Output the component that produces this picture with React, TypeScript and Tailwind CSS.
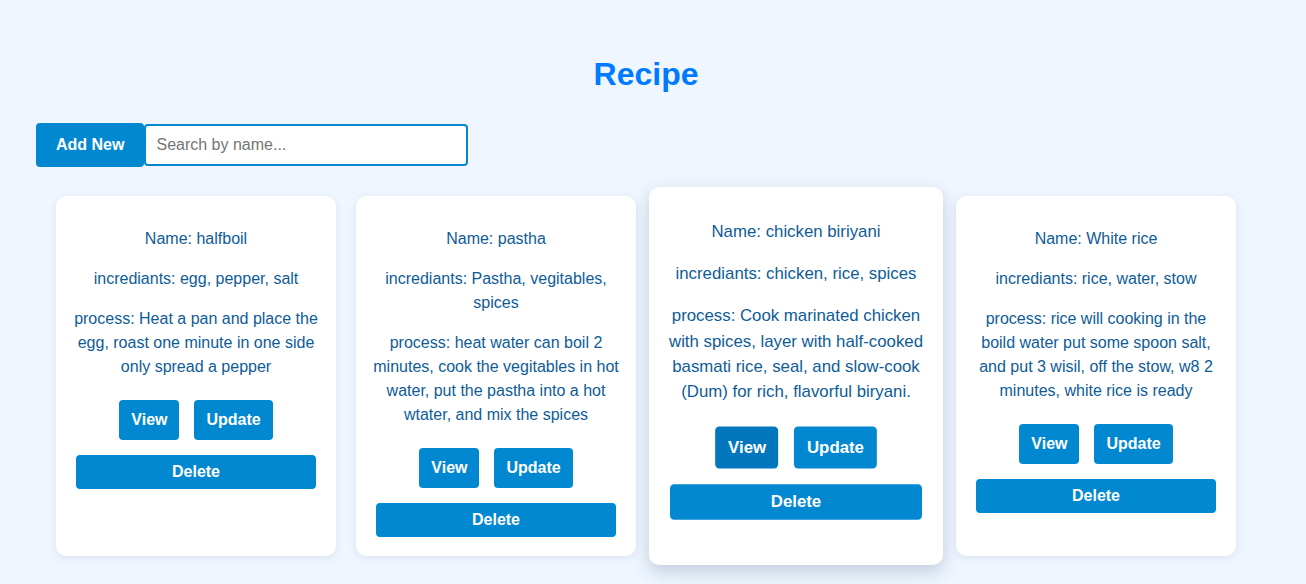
import { useState } from "react";

type Recipe = {
  id: number;
  name: string;
  incrediants: string;
  process: string;
};

const RECIPES: Recipe[] = [
  {
    id: 1,
    name: "halfboil",
    incrediants: "egg, pepper, salt",
    process: "Heat a pan and place the egg, roast one minute in one side only spread a pepper",
  },
  {
    id: 2,
    name: "pastha",
    incrediants: "Pastha, vegitables, spices",
    process:
      "heat water can boil 2 minutes, cook the vegitables in hot water, put the pastha into a hot wtater, and mix the spices",
  },
  {
    id: 3,
    name: "chicken biriyani",
    incrediants: "chicken, rice, spices",
    process:
      "Cook marinated chicken with spices, layer with half-cooked basmati rice, seal, and slow-cook (Dum) for rich, flavorful biryani.",
  },
  {
    id: 4,
    name: "White rice",
    incrediants: "rice, water, stow",
    process:
      "rice will cooking in the boild water put some spoon salt, and put 3 wisil, off the stow, w8 2 minutes, white rice is ready",
  },
];

// the screenshot was taken with the pointer over the third card's View button
const HOVERED_CARD = 3;

function RecipeCard({ recipe, hovered }: { recipe: Recipe; hovered: boolean }) {
  return (
    <div
      className={`w-[280px] bg-white rounded-[10px] px-[15px] pt-[31px] pb-[19px] text-center text-[16px] leading-[24px] text-[#0e5c97] ${
        hovered
          ? "scale-[1.05] shadow-[0_6px_16px_rgba(30,60,100,0.22)]"
          : "shadow-[0_2px_8px_rgba(30,60,100,0.1)]"
      }`}
    >
      <p className="mb-4">Name: {recipe.name}</p>
      <p className="mb-4">incrediants: {recipe.incrediants}</p>
      <p>process: {recipe.process}</p>
      <div className="mt-[21px] flex justify-center gap-[15px]">
        <button
          className={`h-10 px-3 rounded-[4px] text-white font-bold ${
            hovered ? "bg-[#0277bd]" : "bg-[#0288d1]"
          }`}
        >
          View
        </button>
        <button className="h-10 px-3 rounded-[4px] bg-[#0288d1] text-white font-bold">Update</button>
      </div>
      <button className="mt-[15px] mx-auto block w-[240px] h-[34px] rounded-[4px] bg-[#0288d1] text-white font-bold">
        Delete
      </button>
    </div>
  );
}

export default function App() {
  const [search, setSearch] = useState("");

  const shown = RECIPES.filter((r) => r.name.toLowerCase().includes(search.toLowerCase()));

  return (
    <div className="min-h-[584px] bg-[#eff6ff] font-['Liberation_Sans',Arial,sans-serif]">
      <h1 className="pt-[56px] pr-[14px] text-center text-[32px] leading-[37px] font-bold text-[#007bff]">Recipe</h1>

      <div className="mt-[30px] ml-[36px] flex items-center">
        <button className="h-[44px] px-5 rounded-[4px] bg-[#0288d1] text-white font-bold text-[16px]">
          Add New
        </button>
        <input
          value={search}
          onChange={(e) => setSearch(e.target.value)}
          placeholder="Search by name..."
          className="h-[42px] w-[324px] px-[10px] border-2 border-[#0288d1] rounded-[4px] bg-white text-[16px] text-[#333] placeholder:text-[#757575] outline-none"
        />
      </div>

      <div className="mt-[29px] ml-[56px] flex gap-5 items-stretch">
        {shown.map((r) => (
          <RecipeCard key={r.id} recipe={r} hovered={r.id === HOVERED_CARD} />
        ))}
      </div>
    </div>
  );
}
